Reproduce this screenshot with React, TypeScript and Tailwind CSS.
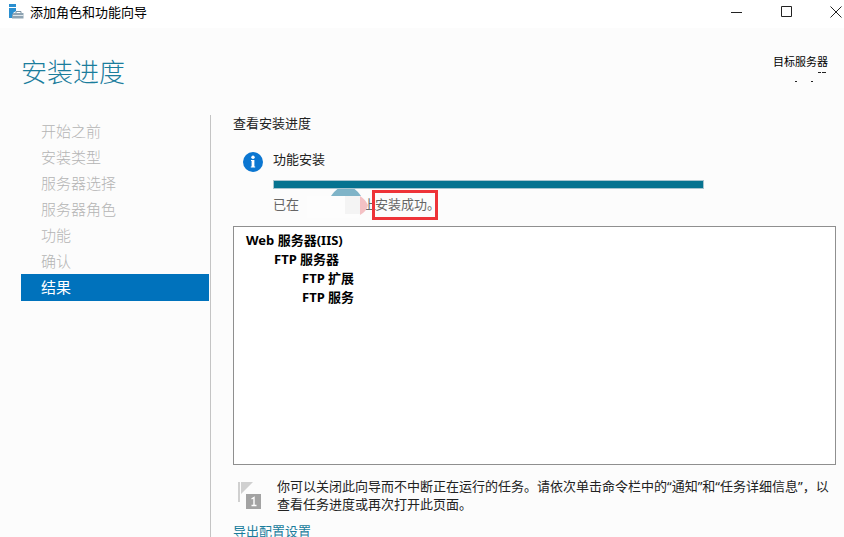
import React from 'react';

interface Step {
  label: string;
  active?: boolean;
}

const steps: Step[] = [
  { label: '开始之前' },
  { label: '安装类型' },
  { label: '服务器选择' },
  { label: '服务器角色' },
  { label: '功能' },
  { label: '确认' },
  { label: '结果', active: true },
];

const ServerIcon = () => (
  <svg className="h-4 w-4" viewBox="0 0 16 16" aria-hidden="true">
    <path d="M1 0h7v3H1zM1 4h7v3L5 9v5H1z" fill="#2a8fd0" />
    <path d="M8 9V7.5h5V9" fill="none" stroke="#7d93a3" />
    <path d="M5.5 9h10v5.5H4v-4z" fill="#8ea3b2" />
    <path d="M5 11.5h10.5" stroke="#dfe7ec" />
  </svg>
);

const InfoIcon = () => (
  <svg className="mt-px h-5 w-5 shrink-0" viewBox="0 0 20 20" aria-hidden="true">
    <circle cx="10" cy="10" r="10" fill="#0b76d1" />
    <circle cx="10" cy="5.2" r="1.7" fill="#fff" />
    <path d="M8 8h3.4v6.6h.8v1H7.8v-1h.8V9H8z" fill="#fff" />
  </svg>
);

const TitleBar = () => (
  <header className="flex h-7 shrink-0 items-center justify-between bg-white pb-1 pl-2">
    <div className="flex items-center gap-1.5">
      <ServerIcon />
      <span className="text-[13px] leading-6 text-black">添加角色和功能向导</span>
    </div>
    <div className="flex items-center gap-9">
      <button type="button" aria-label="最小化" className="flex h-6 w-3.5 items-center justify-center">
        <svg className="h-3 w-3" viewBox="0 0 12 12" stroke="#222" fill="none"><path d="M0 6.5h11" /></svg>
      </button>
      <button type="button" aria-label="最大化" className="flex h-6 w-3.5 items-center justify-center">
        <svg className="h-3 w-3" viewBox="0 0 12 12" stroke="#222" fill="none"><path d="M.5.5h10v10H.5z" /></svg>
      </button>
      <button type="button" aria-label="关闭" className="flex h-6 w-3.5 items-center justify-start">
        <svg className="h-3 w-3" viewBox="0 0 12 12" stroke="#222" fill="none"><path d="M.5.5l11 11M11.5.5l-11 11" /></svg>
      </button>
    </div>
  </header>
);

const StepNav = () => (
  <nav className="w-[189px] shrink-0 pt-[3px] pr-px">
    <ul>
      {steps.map((step) => (
        <li key={step.label}>
          <a
            href="#"
            aria-current={step.active ? 'step' : undefined}
            className={`block pl-5 text-[15px] ${
              step.active ? 'bg-[#0072bc] leading-[27px] text-white' : 'leading-[26px] font-light text-[#b4b4b4]'
            }`}
          >
            {step.label}
          </a>
        </li>
      ))}
    </ul>
  </nav>
);

const App: React.FC = () => {
  return (
    <div className="flex h-screen flex-col overflow-hidden bg-[#fcfcfc] font-['Noto_Sans','Noto_Sans_CJK_SC',sans-serif] text-[13px] text-[#222]">
      <TitleBar />

      <div className="flex h-[87px] shrink-0 items-start justify-between pt-6 pr-4 pl-[21px]">
        <h1 className="text-[26px] leading-10 font-light text-[#1a7d9c]">安装进度</h1>
        <div className="relative pt-0.5 text-[11px] leading-4 text-black">
          目标服务器
          {/* Redacted server name */}
          <svg className="absolute top-4 right-0 h-4 w-12" viewBox="0 0 48 16" fill="#222" aria-hidden="true">
            <path d="M38 4h3v1h-3zM42 4h4v1h-4zM15 13h2v1h-2zM31 13h2v1h-2z" />
          </svg>
        </div>
      </div>

      <main className="flex min-h-0 flex-1 pl-[21px]">
        <StepNav />

        <div className="min-w-0 flex-1 border-l border-[#c4c4c4] pr-1 pl-[22px]">
          <h2 className="leading-4">查看安装进度</h2>

          <section className="mt-5 flex items-start gap-2.5 pl-2.5">
            <InfoIcon />
            <div className="min-w-0 flex-1">
              <label htmlFor="install" className="block leading-4">功能安装</label>
              <progress
                id="install"
                value={100}
                max={100}
                className="mt-[13px] block h-[9px] w-[431px] appearance-none border border-[#a9c5cf] [&::-webkit-progress-bar]:bg-white [&::-webkit-progress-value]:bg-[#067390]"
              />
              <p className="relative flex h-8 items-center text-[#666]">
                <span className="w-[90px]">已在</span>
                <span>上</span>
                <svg className="absolute top-0 left-[34px] h-8 w-16" viewBox="0 0 64 32" aria-hidden="true">
                  <path d="M24 7Q27 2 32 -1H46Q51 2 54 7z" fill="#7fb4c8" />
                  <path d="M0 7h52v22H0z" fill="#fdfdfd" />
                  <path d="M38 7h15v18H38z" fill="#f4f4f4" />
                  <path d="M53 7q5 3 8 9q-1 6-8 10z" fill="#f4c1c4" />
                </svg>
                <strong className="relative -ml-1 w-[66px] border-[3px] border-[#ee3338] py-0.5 font-normal whitespace-nowrap">安装成功。</strong>
              </p>
            </div>
          </section>

          <ul className="mt-[5px] mr-1 h-[239px] border border-[#8f8f8f] bg-white pt-1 pl-3 leading-[19px] font-bold text-black">
            <li>
              Web 服务器(IIS)
              <ul className="pl-7">
                <li>
                  FTP 服务器
                  <ul className="pl-7">
                    <li>FTP 扩展</li>
                    <li>FTP 服务</li>
                  </ul>
                </li>
              </ul>
            </li>
          </ul>

          <div className="mt-3 flex items-start gap-3.5 pl-1">
            <svg className="mt-1 h-7 w-[26px] shrink-0" viewBox="0 0 26 28" aria-hidden="true">
              <path d="M1 1h2v20H1zM4 1h12L4 13z" fill="#d0d0d0" />
              <path d="M9 13h15v15H9z" fill="#a3a3a3" />
              <path d="M14.5 18l2.5-1.5v8M14.5 24.5h5" fill="none" stroke="#fff" strokeWidth="1.4" />
            </svg>
            <p className="min-w-0 flex-1 leading-[18px]">
              你可以关闭此向导而不中断正在运行的任务。请依次单击命令栏中的“通知”和“任务详细信息”，以查看任务进度或再次打开此页面。
            </p>
          </div>

          <a href="#" className="mt-2 block leading-5 text-[#1a7d9c]">导出配置设置</a>
        </div>
      </main>
    </div>
  );
};

export default App;
